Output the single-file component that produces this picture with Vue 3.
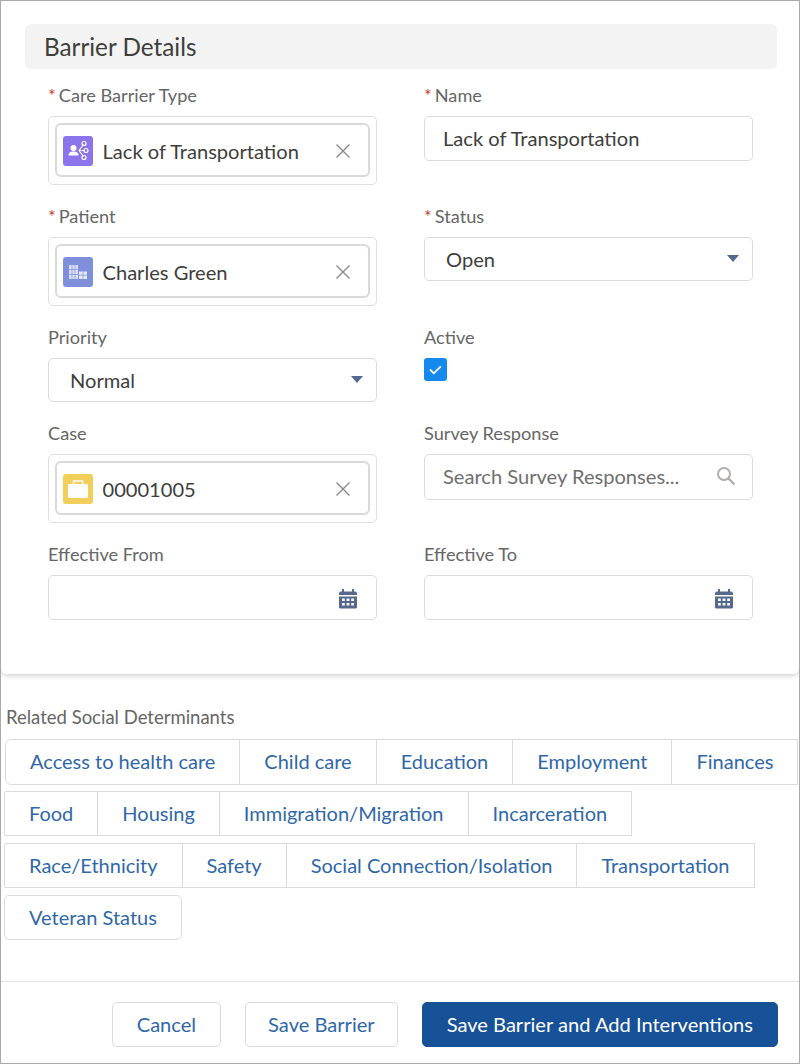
<template>
  <div class="frame">
    <div class="card">
      <h2 class="section-title">Barrier Details</h2>

      <div class="form-grid">
        <div class="field">
          <label class="field-label"><span class="req">*</span>Care Barrier Type</label>
          <div class="lookup-box">
            <div class="pill">
              <span class="obj-icon purple">
                <svg viewBox="0 0 30 30" width="30" height="30">
                  <circle cx="10.500" cy="12" r="3" fill="#fff" />
                  <path d="M5.500 19.500c0-3 2-4 5-4s5 1 5 4z" fill="#fff" />
                  <path d="M16 14.500l4.500-6M16 14.500h5.500M16 14.500l4.500 6" stroke="#fff" stroke-width="1.100" fill="none" />
                  <circle cx="21" cy="7.500" r="2" fill="none" stroke="#fff" stroke-width="1.200" />
                  <circle cx="23" cy="14.500" r="2" fill="none" stroke="#fff" stroke-width="1.200" />
                  <circle cx="21" cy="21.500" r="2" fill="none" stroke="#fff" stroke-width="1.200" />
                </svg>
              </span>
              <span class="pill-text">Lack of Transportation</span>
              <svg class="clear" viewBox="0 0 16 16" width="16" height="16">
                <path d="M1.500 1.500l13 13M14.500 1.500l-13 13" stroke="#8c8c8c" stroke-width="1.400" />
              </svg>
            </div>
          </div>
        </div>

        <div class="field">
          <label class="field-label"><span class="req">*</span>Name</label>
          <div class="input">Lack of Transportation</div>
        </div>

        <div class="field">
          <label class="field-label"><span class="req">*</span>Patient</label>
          <div class="lookup-box">
            <div class="pill">
              <span class="obj-icon indigo">
                <svg viewBox="0 0 30 30" width="30" height="30">
                  <path d="M6 8h9v14H6z" fill="#fff" fill-opacity=".72" />
                  <path d="M6 12.500h9M6 17.500h9M9 8v14M12 8v14" stroke="#7f8fdc" stroke-width=".7" />
                  <path d="M16 14.500h8V22h-8z" fill="#fff" fill-opacity=".8" />
                  <path d="M16 18.200h8M20 14.500V22" stroke="#7f8fdc" stroke-width=".7" />
                </svg>
              </span>
              <span class="pill-text">Charles Green</span>
              <svg class="clear" viewBox="0 0 16 16" width="16" height="16">
                <path d="M1.500 1.500l13 13M14.500 1.500l-13 13" stroke="#8c8c8c" stroke-width="1.400" />
              </svg>
            </div>
          </div>
        </div>

        <div class="field">
          <label class="field-label"><span class="req">*</span>Status</label>
          <div class="select">
            <span>Open</span>
            <span class="caret"></span>
          </div>
        </div>

        <div class="field">
          <label class="field-label">Priority</label>
          <div class="select">
            <span>Normal</span>
            <span class="caret"></span>
          </div>
        </div>

        <div class="field">
          <label class="field-label">Active</label>
          <span class="checkbox">
            <svg viewBox="0 0 23 23" width="23" height="23">
              <path d="M6 11.500l3.800 3.800 7-7" stroke="#fff" stroke-width="1.800" fill="none" />
            </svg>
          </span>
        </div>

        <div class="field">
          <label class="field-label">Case</label>
          <div class="lookup-box">
            <div class="pill">
              <span class="obj-icon yellow">
                <svg viewBox="0 0 30 30" width="30" height="30">
                  <path d="M10.500 10V7h9v3" stroke="#fff" stroke-width="1.500" fill="none" />
                  <rect x="5" y="10" width="20" height="14" rx="1.500" fill="#fff" />
                </svg>
              </span>
              <span class="pill-text">00001005</span>
              <svg class="clear" viewBox="0 0 16 16" width="16" height="16">
                <path d="M1.500 1.500l13 13M14.500 1.500l-13 13" stroke="#8c8c8c" stroke-width="1.400" />
              </svg>
            </div>
          </div>
        </div>

        <div class="field">
          <label class="field-label">Survey Response</label>
          <div class="input search">
            <span class="placeholder">Search Survey Responses...</span>
            <svg viewBox="0 0 20 20" width="20" height="20">
              <circle cx="8" cy="8" r="6" fill="none" stroke="#b0adab" stroke-width="2" />
              <path d="M12.500 12.500l6 6" stroke="#b0adab" stroke-width="2.400" />
            </svg>
          </div>
        </div>

        <div class="field">
          <label class="field-label">Effective From</label>
          <div class="input date">
            <svg viewBox="0 0 20 22" width="20" height="22">
              <path d="M5 1v4M15 1v4" stroke="#54698d" stroke-width="2" />
              <path d="M1 5.500a2 2 0 0 1 2-2h14a2 2 0 0 1 2 2V7H1z" fill="#54698d" />
              <path fill-rule="evenodd" d="M1 8.500h18V19a1.500 1.500 0 0 1-1.500 1.500h-15A1.500 1.500 0 0 1 1 19zM4 10.500v2.500h2.800v-2.500zM8.600 10.500v2.500h2.800v-2.500zM13.200 10.500v2.500H16v-2.500zM4 15v2.500h2.800V15zM8.600 15v2.500h2.800V15zM13.200 15v2.500H16V15z" fill="#54698d" />
            </svg>
          </div>
        </div>

        <div class="field">
          <label class="field-label">Effective To</label>
          <div class="input date">
            <svg viewBox="0 0 20 22" width="20" height="22">
              <path d="M5 1v4M15 1v4" stroke="#54698d" stroke-width="2" />
              <path d="M1 5.500a2 2 0 0 1 2-2h14a2 2 0 0 1 2 2V7H1z" fill="#54698d" />
              <path fill-rule="evenodd" d="M1 8.500h18V19a1.500 1.500 0 0 1-1.500 1.500h-15A1.500 1.500 0 0 1 1 19zM4 10.500v2.500h2.800v-2.500zM8.600 10.500v2.500h2.800v-2.500zM13.200 10.500v2.500H16v-2.500zM4 15v2.500h2.800V15zM8.600 15v2.500h2.800V15zM13.200 15v2.500H16V15z" fill="#54698d" />
            </svg>
          </div>
        </div>
      </div>
    </div>

    <div class="related">
      <div class="related-label">Related Social Determinants</div>
      <div v-for="(row, i) in determinantRows" :key="i" class="btn-row">
        <button v-for="name in row" :key="name" class="tag">{{ name }}</button>
      </div>
    </div>

    <div class="footer">
      <button class="btn">Cancel</button>
      <button class="btn save">Save Barrier</button>
      <button class="btn primary">Save Barrier and Add Interventions</button>
    </div>
  </div>
</template>

<script setup>
const determinantRows = [
  ['Access to health care', 'Child care', 'Education', 'Employment', 'Finances'],
  ['Food', 'Housing', 'Immigration/Migration', 'Incarceration'],
  ['Race/Ethnicity', 'Safety', 'Social Connection/Isolation', 'Transportation'],
  ['Veteran Status']
]
</script>

<style scoped>
.frame {
  width: 800px;
  height: 1064px;
  box-sizing: border-box;
  border: 1px solid #a9a9a9;
  display: flex;
  flex-direction: column;
  overflow: hidden;
  background: #fff;
  font-family: Lato, "Noto Sans", sans-serif;
  color: #3e3e3c;
}

.card {
  height: 673px;
  flex: none;
  box-sizing: border-box;
  padding-top: 23px;
  border-radius: 0 0 6px 6px;
  box-shadow: 0 2px 5px rgba(0, 0, 0, 0.18);
}

.section-title {
  margin: 0 22px 0 24px;
  height: 45px;
  padding-left: 19px;
  border-radius: 6px;
  background: #f3f3f3;
  font-size: 24.3px;
  font-weight: 400;
  line-height: 45px;
}

.form-grid {
  display: grid;
  grid-template-columns: 329px 329px;
  column-gap: 47px;
  row-gap: 22px;
  margin: 17px 0 0 47px;
}

.field-label {
  display: block;
  height: 30px;
  font-size: 18.200px;
  line-height: 18px;
  color: #666;
}

.req {
  color: #c23934;
  margin-right: 3px;
}

.lookup-box {
  box-sizing: border-box;
  height: 69px;
  padding: 6px 6.500px 6px 5.500px;
  border: 1.5px solid #e0dfde;
  border-radius: 5px;
}

.pill {
  box-sizing: border-box;
  height: 54px;
  display: flex;
  align-items: center;
  padding: 1px 17px 0 6px;
  border: 2px solid #d9d9d9;
  border-radius: 6px;
}

.obj-icon {
  flex: none;
  width: 30px;
  height: 30px;
  border-radius: 3px;
  display: flex;
}

.purple { background: #8c75ec; }
.indigo { background: #7f8fdc; }
.yellow { background: #f2cf5b; }

.pill-text {
  flex: 1;
  margin-left: 10px;
  font-size: 20.100px;
  color: #3e3e3c;
}

.clear {
  flex: none;
}

.input,
.select {
  box-sizing: border-box;
  height: 45px;
  display: flex;
  align-items: center;
  border: 1.5px solid #dddbda;
  border-radius: 5px;
  padding: 0 18px 1px;
  font-size: 20.100px;
  color: #3e3e3c;
}

.select {
  height: 44px;
  justify-content: space-between;
  padding: 0 13px 1px 21px;
}

.caret {
  width: 0;
  height: 0;
  border-left: 6px solid transparent;
  border-right: 6px solid transparent;
  border-top: 7px solid #54698d;
}

.search {
  justify-content: space-between;
  height: 46px;
  padding: 0 16px 2px 18px;
}

.placeholder {
  color: #6f6f6f;
}

.date {
  justify-content: flex-end;
  padding: 3px 18px 0 0;
}

.checkbox {
  display: block;
  width: 23px;
  height: 23px;
  border-radius: 3px;
  background: #1589ee;
}

.related {
  padding-top: 31px;
  padding-left: 3px;
}

.related-label {
  height: 24px;
  margin: 0 0 10px 2px;
  font-size: 18.500px;
  line-height: 24px;
  color: #666;
}

.btn-row {
  display: flex;
  margin-bottom: 7px;
}

/* first row sits a pixel further in and a pixel taller */
.btn-row:nth-child(2) {
  margin-left: 1px;
  margin-bottom: 6px;
}

.btn-row:nth-child(2) .tag {
  height: 46px;
}

.tag {
  flex: none;
  height: 45px;
  padding: 0 24px 2px;
  margin-left: -1px;
  background: #fff;
  border: 1.5px solid #dddbda;
  font-family: inherit;
  font-size: 20px;
  color: #2f68a8;
}

.tag:first-child {
  margin-left: 0;
  border-radius: 2px 0 0 2px;
}

.btn-row:nth-child(2) .tag:first-child {
  border-radius: 6px 0 0 6px;
}

.tag:only-child {
  border-radius: 5px;
}

.footer {
  margin-top: auto;
  height: 82px;
  box-sizing: border-box;
  display: flex;
  justify-content: flex-end;
  gap: 24px;
  padding: 20px 21px 0 0;
  border-top: 1.5px solid #e2e2e2;
}

.btn {
  height: 45px;
  padding: 0 24px 2px;
  background: #fff;
  border: 1.5px solid #dddbda;
  border-radius: 5px;
  font-family: inherit;
  font-size: 20.100px;
  color: #2f68a8;
}

.btn.save {
  padding: 0 22px 2px;
}

.btn.primary {
  background: #175197;
  border-color: #175197;
  color: #fff;
}
</style>
